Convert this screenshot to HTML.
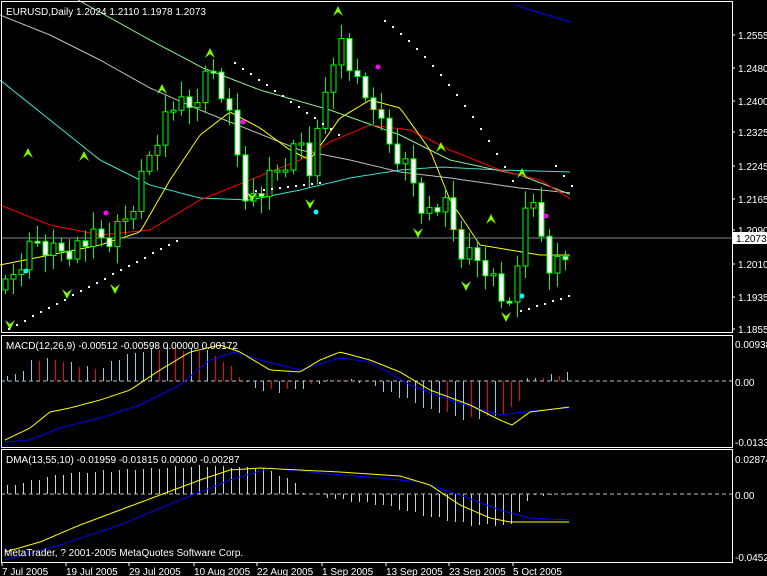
<!DOCTYPE html>
<html><head><meta charset="utf-8"><style>
html,body{margin:0;padding:0;background:#000;width:767px;height:576px;overflow:hidden}
svg{display:block}
text{font-family:"Liberation Sans",sans-serif;font-size:10px;fill:#fff}
</style></head><body>
<svg id="s" width="767" height="576" xmlns="http://www.w3.org/2000/svg">
<rect x="0" y="0" width="767" height="576" fill="#000"/>
</svg>
<script>
(function(){
var s=document.getElementById('s'),h='';
function pl(pts,c,w){h+='<polyline fill="none" stroke="'+c+'" stroke-width="'+(w||1)+'" points="'+pts.map(function(p){return p.join(',');}).join(' ')+'"/>';}
function interp(k,x){for(var i=1;i<k.length;i++){if(x<=k[i][0]){var a=k[i-1],b=k[i];return a[1]+(b[1]-a[1])*(x-a[0])/(b[0]-a[0]);}}return k[k.length-1][1];}
function smooth(k){var r=[];for(var x=k[0][0];x<=k[k.length-1][0];x+=3)r.push([x,interp(k,x).toFixed(1)]);return r;}
pl(smooth([[78,0],[150,40],[203,68],[260,90],[330,110],[400,135],[450,160],[520,175],[572,195]]),'#90ee90');
pl(smooth([[0,15],[50,35],[100,60],[150,88],[200,110],[250,130],[300,150],[350,160],[400,172],[450,178],[520,188],[572,193]]),'#c0c0c0');
pl(smooth([[0,80],[50,120],[100,160],[150,185],[200,198],[250,200],[300,190],[350,178],[400,170],[440,167],[500,170],[572,172]]),'#40e0d0');
pl(smooth([[0,205],[50,225],[100,235],[150,230],[200,200],[250,180],[300,160],[330,142],[370,125],[410,130],[450,150],[500,170],[540,180],[572,200]]),'#ff0000');
pl(smooth([[0,265],[50,255],[100,245],[140,232],[170,180],[200,135],[230,112],[260,128],[290,150],[310,160],[340,118],[370,100],[400,108],[430,150],[450,200],[480,245],[510,250],[540,255],[572,255]]),'#ffff00');
pl([[515,5],[570,22]],'#0000ff');
h+='<line x1="1" y1="238" x2="732" y2="238" stroke="#778899"/>';
var K=[[5,290],[20,265],[35,240],[50,250],[70,248],[90,240],[110,240],[130,212],[150,150],[170,105],[190,110],[205,80],[215,70],[230,120],[245,190],[255,200],[270,180],[290,158],[300,140],[310,170],[320,120],[330,60],[340,40],[352,75],[362,100],[372,100],[382,130],[392,150],[402,160],[412,178],[422,205],[432,215],[442,200],[460,252],[480,262],[490,272],[500,300],[510,290],[520,262],[526,192],[540,235],[550,270],[572,255]];
var prev=interp(K,5),i,x;
for(i=0;i<71;i++){x=5+i*8;var c=interp(K,x)+((i*37)%11-5)*2.2,o=prev;
 var hi=Math.min(o,c)-4-((i*13)%9)*1.6,lo=Math.max(o,c)+4+((i*7)%9)*1.6;
 h+='<line x1="'+(x+.5)+'" y1="'+hi.toFixed(1)+'" x2="'+(x+.5)+'" y2="'+lo.toFixed(1)+'" stroke="#00ff00"/>';
 var t=Math.min(o,c),bb=Math.max(o,c);if(bb-t<2)bb=t+2;
 h+='<rect x="'+(x-2)+'" y="'+t.toFixed(1)+'" width="5" height="'+(bb-t).toFixed(1)+'" fill="'+(c>o?'#fff':'#000')+'" stroke="#00ff00"/>';
 prev=c;}
var sar=[];
for(i=0;i<22;i++)sar.push([8+i*8,328-i*4.2]);
for(i=0;i<14;i++)sar.push([234+i*8,62+i*5.5]);
for(i=0;i<9;i++)sar.push([255+i*8,190-i]);
for(i=0;i<17;i++)sar.push([384+i*8,20+i*6+i*i*0.25]);
for(i=0;i<7;i++)sar.push([520+i*8,310-i*2.5]);
for(i=0;i<3;i++)sar.push([555+i*8,165+i*10]);
sar.forEach(function(p){h+='<rect x="'+p[0]+'" y="'+p[1].toFixed(0)+'" width="2" height="2" fill="#fff"/>';});
function up(x,y){h+='<path d="M'+(x-5)+','+(y+6)+' L'+x+','+(y-4)+' L'+(x+5)+','+(y+6)+' L'+x+','+(y+2)+'Z" fill="#7cfc00"/>';}
function dn(x,y){h+='<path d="M'+(x-5)+','+(y-6)+' L'+x+','+(y+4)+' L'+(x+5)+','+(y-6)+' L'+x+','+(y-2)+'Z" fill="#7cfc00"/>';}
[[28,152],[84,155],[162,88],[210,52],[338,10],[441,146],[491,218],[522,172]].forEach(function(p){up(p[0],p[1]);});
[[10,326],[67,295],[115,290],[252,198],[310,205],[418,234],[466,287],[506,318]].forEach(function(p){dn(p[0],p[1]);});
[[106,213],[243,122],[378,67],[546,216]].forEach(function(p){h+='<circle cx="'+p[0]+'" cy="'+p[1]+'" r="2.5" fill="#ff00ff"/>';});
[[26,271],[316,212],[522,296]].forEach(function(p){h+='<circle cx="'+p[0]+'" cy="'+p[1]+'" r="2.5" fill="#00ffff"/>';});
var my=[[5,440],[30,428],[50,412],[70,408],[100,400],[130,390],[160,370],[190,352],[220,345],[240,352],[270,370],[300,372],[320,360],[340,352],[370,360],[400,372],[430,390],[470,405],[500,420],[512,425],[530,412],[570,407]];
var mb=[[5,442],[30,440],[60,428],[100,418],[140,405],[180,385],[210,360],[235,352],[260,360],[300,370],[340,358],[370,362],[410,385],[450,400],[500,415],[540,410],[570,408]];
var hist=[[5,378],[20,370],[30,360],[60,360],[90,370],[110,362],[140,350],[170,348],[200,350],[225,362],[240,380],[250,387],[280,392],[310,385],[340,378],[370,385],[400,398],[430,410],[460,418],[490,418],[515,405],[525,380],[540,376],[570,374]];
var pv=381;
for(i=0;i<71;i++){x=5+i*8;var tp=interp(hist,x)+((i*7)%5-2);
 var col=(tp<pv)?'#87ceeb':'#ff0000';if(tp>381)col=(tp>pv)?'#87ceeb':'#ff0000';
 h+='<line x1="'+(x+2.5)+'" y1="381" x2="'+(x+2.5)+'" y2="'+tp.toFixed(0)+'" stroke="'+col+'"/>';pv=tp;}
h+='<line x1="1" y1="381" x2="732" y2="381" stroke="#c0c0c0" stroke-dasharray="4,3"/>';
pl(smooth(mb),'#0000ff');pl(smooth(my),'#ffff00');
var dy=[[5,552],[40,542],[80,525],[120,510],[160,495],[200,480],[230,470],[260,468],[300,470],[340,472],[400,476],[430,485],[460,505],[490,518],[510,522],[540,522],[570,522]];
var db=[[5,560],[60,545],[120,525],[180,500],[230,480],[270,468],[330,474],[380,478],[420,482],[460,495],[500,510],[530,518],[570,520]];
var dh=[[5,486],[60,474],[120,470],[200,466],[260,468],[290,480],[300,492],[340,500],[380,505],[420,515],[470,525],[510,525],[520,505],[530,496],[570,494]];
for(i=0;i<71;i++){x=5+i*8;var tq=interp(dh,x)+((i*5)%3-1);
 h+='<line x1="'+(x+2.5)+'" y1="494" x2="'+(x+2.5)+'" y2="'+tq.toFixed(0)+'" stroke="#d0d0d0"/>';}
h+='<line x1="1" y1="494" x2="732" y2="494" stroke="#c0c0c0" stroke-dasharray="4,3"/>';
pl(smooth(db),'#0000ff');pl(smooth(dy),'#ffff00');
h+='<rect x="1.5" y="1.5" width="731" height="331" fill="none" stroke="#fff"/>';
h+='<rect x="1.5" y="335.5" width="731" height="112" fill="none" stroke="#fff"/>';
h+='<rect x="1.5" y="449.5" width="731" height="113" fill="none" stroke="#fff"/>';
[['1.2555',35],['1.2480',68],['1.2400',101],['1.2325',132],['1.2245',166],['1.2165',199],['1.2090',230],['1.2010',264],['1.1935',297],['1.1855',329]].forEach(function(p){h+='<line x1="732" y1="'+p[1]+'" x2="735" y2="'+p[1]+'" stroke="#fff"/><text x="738" y="'+(p[1]+4)+'">'+p[0]+'</text>';});
h+='<rect x="733" y="232" width="34" height="12" fill="#fff"/><text x="736" y="242" style="fill:#000">1.2073</text>';
[['0.00938',344],['0.00',382],['-0.01331',442],['0.02874',459],['0.00',495],['-0.04521',557]].forEach(function(p){h+='<text x="735" y="'+(p[1]+4)+'">'+p[0]+'</text>';});
h+='<text x="6" y="15">EURUSD,Daily  1.2024 1.2110 1.1978 1.2073</text>';
h+='<text x="6" y="349">MACD(12,26,9) -0.00512 -0.00598 0.00000 0.00172</text>';
h+='<text x="6" y="463">DMA(13,55,10) -0.01959 -0.01815 0.00000 -0.00287</text>';
h+='<text x="4" y="556">MetaTrader, ? 2001-2005 MetaQuotes Software Corp.</text>';
[['7 Jul 2005',2],['19 Jul 2005',66],['29 Jul 2005',129],['10 Aug 2005',194],['22 Aug 2005',257],['1 Sep 2005',322],['13 Sep 2005',386],['23 Sep 2005',449],['5 Oct 2005',513]].forEach(function(p){h+='<line x1="'+p[1]+'" y1="563" x2="'+p[1]+'" y2="566" stroke="#fff"/><text x="'+p[1]+'" y="575">'+p[0]+'</text>';});
s.innerHTML+=h;
})();
</script>
</body></html>
